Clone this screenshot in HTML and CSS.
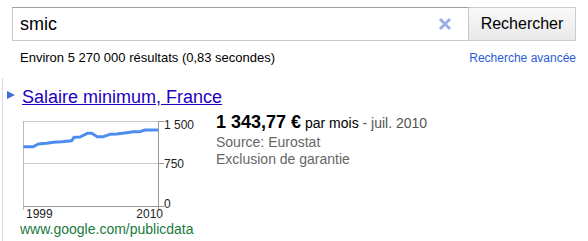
FILE: index.html
```html
<!DOCTYPE html>
<html lang="fr">
<head>
	<meta charset="UTF-8">
	<title>smic - Recherche</title>
	<link rel="stylesheet" href="styles.css">
</head>
<body>

<div class="search">
	<div class="box">
		<span class="q">smic</span>
		<svg class="clear" width="14" height="14" viewBox="0 0 14 14">
			<path d="M2 2 L12 12 M12 2 L2 12" stroke="#9bb1e4" stroke-width="3" stroke-linecap="butt"/>
		</svg>
	</div>
	<button class="btn">Rechercher</button>
</div>

<div class="stats">
	<span>Environ 5 270 000 résultats (0,83 secondes)</span>
	<a class="adv" href="#">Recherche avancée</a>
</div>

<div class="result">
	<div class="title-row">
		<span class="arrow"></span>
		<a class="title" href="#">Salaire minimum, France</a>
	</div>

	<div class="chart-row">
		<svg class="chart" width="190" height="104" viewBox="0 0 190 104">
			<line x1="3" y1="7.5" x2="138" y2="7.5" stroke="#ccc"/>
			<line x1="3" y1="49.5" x2="138" y2="49.5" stroke="#ccc"/>
			<line x1="3.5" y1="7" x2="3.5" y2="96" stroke="#bbb"/>
			<line x1="3" y1="92.5" x2="144" y2="92.5" stroke="#999"/>
			<line x1="138.5" y1="7" x2="138.5" y2="96" stroke="#999"/>
			<line x1="138" y1="7.5" x2="144" y2="7.5" stroke="#999"/>
			<line x1="138" y1="49.5" x2="144" y2="49.5" stroke="#999"/>
			<polyline fill="none" stroke="#4c8ef0" stroke-width="3" stroke-linejoin="round"
				points="3.3,32.7 13.3,32.7 18.3,30 26.7,29.3 33.3,28.3 41.7,27.7 51.7,26.7 54,23.3 60,23 67.3,19.3 71.7,19.3 77.3,22.7 83.3,22.7 90,20.3 96.7,20 106.7,18.7 113.3,17.7 120,17.7 125,16 138.3,16"/>
			<text x="144" y="15" class="lbl">1 500</text>
			<text x="144" y="53.5" class="lbl">750</text>
			<text x="144" y="93.5" class="lbl">0</text>
			<text x="6" y="104" class="lbl">1999</text>
			<text x="143" y="104" class="lbl" text-anchor="end">2010</text>
		</svg>

		<div class="info">
			<div class="value"><b>1 343,77 €</b> <span class="unit">par mois</span> <span class="date">- juil. 2010</span></div>
			<div class="meta">Source: Eurostat</div>
			<div class="meta">Exclusion de garantie</div>
		</div>
	</div>

	<div class="url">www.google.com/publicdata</div>
</div>

</body>
</html>
```

FILE: styles.css
```css
body {
	margin: 0;
	font-family: "Liberation Sans", Arial, sans-serif;
	color: #000;
	background: #fff;
}

.search {
	display: flex;
	height: 34px;
	padding: 7px 12px 0 12px;
}

.box {
	flex: 1;
	display: flex;
	align-items: center;
	border: 1px solid #c8c8c8;
	border-top-color: #a0a0a0;
	padding-left: 7px;
}

.q {
	font-size: 18px;
}

.clear {
	margin-left: auto;
	margin-right: 16px;
}

.btn {
	width: 107px;
	border: 1px solid #ccc;
	border-left: none;
	background: linear-gradient(#f9f9f9, #e9e9e9);
	font-family: "Liberation Sans", Arial, sans-serif;
	font-size: 16px;
	color: #000;
	padding: 0;
}

.stats {
	display: flex;
	justify-content: space-between;
	align-items: baseline;
	margin-top: 9px;
	padding: 0 12px 0 20px;
	font-size: 13px;
	line-height: 16px;
}

.adv {
	color: #2a5bd6;
	text-decoration: none;
	font-size: 12px;
}

.result {
	margin-top: 12px;
	margin-left: 2px;
	border-left: 1px solid #d3ddf0;
	padding-top: 8px;
	padding-bottom: 10px;
}

.title-row {
	display: flex;
	align-items: center;
	height: 22px;
}

.arrow {
	width: 0;
	height: 0;
	margin-left: 4px;
	margin-right: 7px;
	margin-top: -4px;
	border-top: 4px solid transparent;
	border-bottom: 4px solid transparent;
	border-left: 8px solid #3d6fd6;
}

.title {
	font-size: 18px;
	line-height: 22px;
	color: #2200c1;
}

.chart-row {
	display: flex;
	align-items: flex-start;
	margin-top: 4px;
}

.chart {
	margin-left: 17px;
	margin-top: 2px;
	overflow: visible;
}

.lbl {
	font-family: "Liberation Sans", Arial, sans-serif;
	font-size: 12px;
	fill: #222;
}

.info {
	margin-left: 6px;
}

.value {
	font-size: 14px;
	line-height: 21px;
}

.value b {
	font-size: 18px;
}

.date {
	color: #555;
}

.meta {
	font-size: 14px;
	line-height: 17px;
	color: #666;
}

.url {
	margin-top: 5px;
	margin-left: 17px;
	font-size: 14px;
	line-height: 12px;
	color: #1a7a3e;
}
```
